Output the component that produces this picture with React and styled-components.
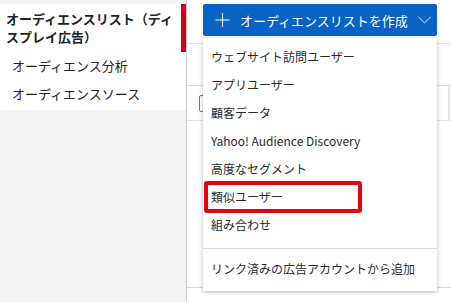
import React from 'react'
import styled, { createGlobalStyle } from 'styled-components'

const GlobalStyle = createGlobalStyle`
  html, body {
    margin: 0;
    padding: 0;
    background: #ffffff;
    font-family: "Noto Sans CJK JP", "Noto Sans", sans-serif;
    color: #333333;
  }
`

const Page = styled.div`
  display: flex;
  width: 451px;
  height: 302px;
  overflow: hidden;
`

const Sidebar = styled.aside`
  width: 186px;
  flex-shrink: 0;
  background: #f3f3f3;
  border-right: 1px solid #c8c8c8;
  padding-top: 4px;
  box-sizing: content-box;
`

const SideNav = styled.nav`
  background: #ffffff;
  padding-bottom: 2px;
`

const SideItem = styled.div`
  position: relative;
  padding: ${(p) => (p.$active ? '6px 10px 6px 6px' : '0 8px 0 12px')};
  font-size: 13px;
  font-weight: ${(p) => (p.$active ? 700 : 400)};
  line-height: ${(p) => (p.$active ? '18px' : '28px')};
  color: #222222;
  ${(p) =>
    p.$active &&
    `&::after {
      content: '';
      position: absolute;
      right: 0;
      top: 0;
      bottom: 0;
      width: 5px;
      background: #d7001a;
    }`}
`

const Main = styled.main`
  position: relative;
  flex: 1;
  display: flex;
  flex-direction: column;
`

const Toolbar = styled.div`
  height: 43px;
  border-bottom: 1px solid #e3e3e3;
`

const Filler = styled.div`
  height: 41px;
  border-bottom: 1px solid #d9d9d9;
`

const TableHead = styled.div`
  height: 34px;
  display: flex;
  align-items: center;
  padding-left: 12px;
  border-bottom: 1px solid #e3e3e3;
  justify-content: space-between;
`

const CheckBox = styled.span`
  width: 14px;
  height: 15px;
  border: 1px solid #3d7fd1;
  border-radius: 2px;
  background: #fff;
`

const HeadCell = styled.span`
  width: 14px;
  height: 34px;
  border-left: 1px solid #dcdcdc;
  margin-right: -12px;
  background: #f4f4f4;
`

const Body = styled.div`
  height: 166px;
  border-bottom: 1px solid #d6d6d6;
`

const Menu = styled.div`
  position: absolute;
  left: 16px;
  top: 4px;
  width: 234px;
`

const CreateButton = styled.button`
  width: 100%;
  height: 32px;
  display: flex;
  align-items: center;
  gap: 10px;
  padding: 0 6px 0 12px;
  border: none;
  border-radius: 2px;
  background: #0b62c5;
  color: #ffffff;
  font-family: inherit;
  font-size: 13px;
  white-space: nowrap;
`

const ButtonLabel = styled.span`
  flex: 1;
  text-align: left;
`

const Dropdown = styled.ul`
  list-style: none;
  margin: 2px 0 0;
  padding: 5px 0 8px;
  background: #ffffff;
  box-shadow: 0 1px 4px rgba(0, 0, 0, 0.28);
  position: relative;
`

const Option = styled.li`
  height: 28px;
  line-height: 28px;
  padding-left: 8px;
  font-size: 12px;
  color: #2a2a2a;
  white-space: nowrap;
`

const Divider = styled.li`
  height: 0;
  border-top: 1px solid #d8d8d8;
  margin: 9px 0 6px;
`

const Highlight = styled.span`
  position: absolute;
  left: 1px;
  top: 143px;
  width: 150px;
  height: 24px;
  border: 4px solid #e60012;
  border-radius: 3px;
`

const options = [
  'ウェブサイト訪問ユーザー',
  'アプリユーザー',
  '顧客データ',
  'Yahoo! Audience Discovery',
  '高度なセグメント',
  '類似ユーザー',
  '組み合わせ',
]

const PlusIcon = () => (
  <svg width="16" height="16" viewBox="0 0 16 16" fill="none" stroke="#fff" strokeWidth="1.1">
    <path d="M8 0.5v15M0.5 8h15" />
  </svg>
)

const ChevronIcon = () => (
  <svg width="14" height="8" viewBox="0 0 14 8" fill="none" stroke="#fff" strokeWidth="0.9">
    <path d="M0.5 0.8l6.5 6.2 6.5-6.2" />
  </svg>
)

export default function App() {
  return (
    <>
      <GlobalStyle />
      <Page>
        <Sidebar>
          <SideNav>
            <SideItem $active>オーディエンスリスト（ディスプレイ広告）</SideItem>
            <SideItem>オーディエンス分析</SideItem>
            <SideItem>オーディエンスソース</SideItem>
          </SideNav>
        </Sidebar>
        <Main>
          <Toolbar />
          <Filler />
          <TableHead>
            <CheckBox />
            <HeadCell />
          </TableHead>
          <Body />
          <Menu>
            <CreateButton>
              <PlusIcon />
              <ButtonLabel>オーディエンスリストを作成</ButtonLabel>
              <ChevronIcon />
            </CreateButton>
            <Dropdown>
              {options.map((o) => (
                <Option key={o}>{o}</Option>
              ))}
              <Divider />
              <Option>リンク済みの広告アカウントから追加</Option>
              <Highlight />
            </Dropdown>
          </Menu>
        </Main>
      </Page>
    </>
  )
}
